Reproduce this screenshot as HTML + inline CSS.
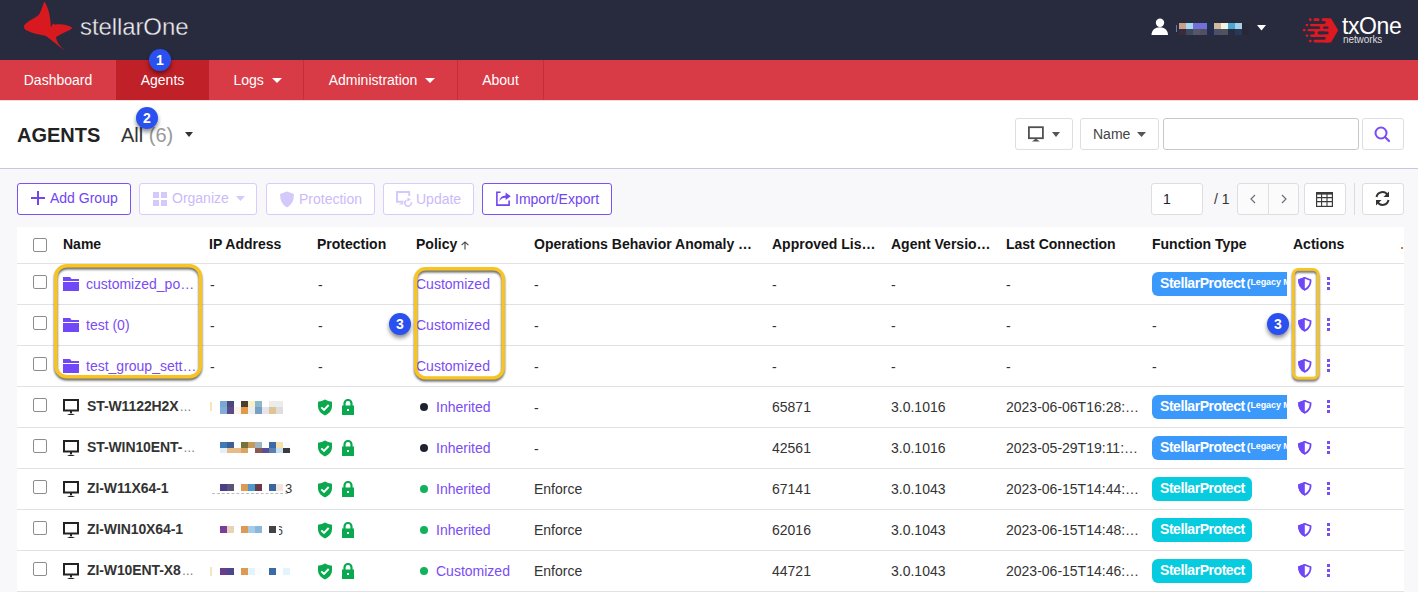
<!DOCTYPE html>
<html><head><meta charset="utf-8">
<style>
*{box-sizing:border-box;margin:0;padding:0}
html,body{width:1418px;height:592px;overflow:hidden;background:#fff;font-family:"Liberation Sans",sans-serif;color:#222}
.abs{position:absolute}
#hdr{position:absolute;left:0;top:0;width:1418px;height:60px;background:#282a3e}
#nav{position:absolute;left:0;top:60px;width:1418px;height:40px;background:#d83b45}
.ni{position:absolute;top:0;height:40px;line-height:40px;color:#fff;font-size:14px;text-align:center}
.sep{position:absolute;top:0;width:1px;height:40px;background:#c42e38}
.badge{position:absolute;width:22px;height:22px;border-radius:50%;background:#2a50f0;color:#fff;font-size:14px;font-weight:bold;text-align:center;line-height:22px;box-shadow:0 3px 4px rgba(0,0,0,.45)}
#title{position:absolute;left:0;top:100px;width:1418px;height:69px;background:#fff;border-bottom:1px solid #c4c7e6}
#tb{position:absolute;left:0;top:169px;width:1418px;height:423px;background:#f8f8fb}
.btn{position:absolute;top:183px;height:32px;border:1px solid #7a52f4;border-radius:3px;background:#fff;color:#6f46f2;font-size:14px;line-height:30px}
.btn.dis{border-color:#d9ccfb;color:#cbbaf9}
.gbtn{position:absolute;border:1px solid #dedee0;border-radius:3px;background:#fff}
#table{position:absolute;left:17px;top:227px;width:1387px;height:365px;background:#fff}
.th{position:absolute;top:236px;font-size:14px;font-weight:bold;color:#151515;white-space:nowrap}
.hl{position:absolute;left:17px;width:1387px;height:1px;background:#e2e2e4}
.cb{position:absolute;width:14px;height:14px;border:1px solid #8d8d8f;border-radius:2px;background:#fff}
.td{position:absolute;font-size:14px;color:#333;white-space:nowrap}
.lnk{color:#7a4cf4}
.ft{position:absolute;height:24px;border-radius:5px;color:#fff;font-weight:bold;font-size:14px;line-height:20px;padding-left:8px;white-space:nowrap;overflow:hidden}
.yb{position:absolute;border:3px solid #f2bf2e;border-radius:9px;box-shadow:1px 2px 3px rgba(0,0,0,.55), inset 1px 1px 2px rgba(0,0,0,.35)}
</style></head><body>
<div id="hdr"></div>
<!-- stellarOne logo -->
<svg class="abs" style="left:0;top:0" width="200" height="60" viewBox="0 0 200 60">
<path fill="#d8191f" d="M44.3,1.5 C47.5,6 50.5,14 50.9,27.3 L53.1,23.5 Q54.5,24.8 56,24.6 C62,23.8 68,24.8 72.6,28.1 C68,31.5 61,34 56,37 C56.5,42 60,47 65.8,50.8 C60,47.5 53,41 46,36 C38,34.5 32,33 28,31 C23,29.5 23,25 26,23.5 C29,20.5 35,18 38.7,15 C41,12 42.5,6 44.3,1.5 Z"/>
</svg>
<div class="abs" style="left:80px;top:13px;font-size:24px;color:#eeeef0;letter-spacing:-0.1px;-webkit-text-stroke:0.35px #282a3e">stellarOne</div>
<!-- user -->
<svg class="abs" style="left:1150px;top:18px" width="19" height="18" viewBox="0 0 19 18"><circle cx="10" cy="4.8" r="4.2" fill="#fff"/><path d="M1.5,17 C1.5,12 5,9.2 9.8,9.2 C14.5,9.2 18,12 18,17 Z" fill="#fff"/></svg>
<div class="abs" style="left:1179px;top:23px;width:7px;height:6px;background:#c8a08a"></div>
<div class="abs" style="left:1179px;top:29px;width:7px;height:6px;background:#3a2a3a"></div>
<div class="abs" style="left:1186px;top:23px;width:7px;height:6px;background:#a8d8f0"></div>
<div class="abs" style="left:1186px;top:29px;width:7px;height:6px;background:#3c4860"></div>
<div class="abs" style="left:1193px;top:23px;width:7px;height:6px;background:#7070d8"></div>
<div class="abs" style="left:1193px;top:29px;width:7px;height:6px;background:#56566a"></div>
<div class="abs" style="left:1200px;top:23px;width:7px;height:6px;background:#7070d8"></div>
<div class="abs" style="left:1200px;top:29px;width:7px;height:6px;background:#505060"></div>
<div class="abs" style="left:1207px;top:23px;width:7px;height:6px;background:#1e3050"></div>
<div class="abs" style="left:1207px;top:29px;width:7px;height:6px;background:#262a50"></div>
<div class="abs" style="left:1214px;top:23px;width:7px;height:6px;background:#d4b898"></div>
<div class="abs" style="left:1214px;top:29px;width:7px;height:6px;background:#4a5068"></div>
<div class="abs" style="left:1221px;top:23px;width:7px;height:6px;background:#f0f4e4"></div>
<div class="abs" style="left:1221px;top:29px;width:7px;height:6px;background:#505260"></div>
<div class="abs" style="left:1228px;top:23px;width:7px;height:6px;background:#48a8d0"></div>
<div class="abs" style="left:1228px;top:29px;width:7px;height:6px;background:#282c40"></div>
<div class="abs" style="left:1235px;top:23px;width:7px;height:6px;background:#a8d0e4"></div>
<div class="abs" style="left:1235px;top:29px;width:7px;height:6px;background:#283858"></div>
<div class="abs" style="left:1242px;top:23px;width:7px;height:6px;background:#262838"></div>
<div class="abs" style="left:1242px;top:29px;width:7px;height:6px;background:#262838"></div>
<div class="abs" style="left:1176px;top:25px;width:1px;height:7px;background:#6a76b0"></div>
<svg class="abs" style="left:1257px;top:25px" width="10" height="6"><path d="M0,0 L9,0 L4.5,5.5Z" fill="#fff"/></svg>
<!-- txOne logo -->
<svg class="abs" style="left:1300px;top:14px" width="42" height="32" viewBox="0 0 42 32">
<g fill="#dd1a22">
<path d="M24.5,4.3 H31 L38.2,16.3 L31,28.4 H24.5 Z"/>
<rect x="21.6" y="4.3" width="6" height="2.8" rx="1.4"/>
<rect x="13.5" y="4.3" width="6" height="2.8" rx="1.4"/>
<rect x="10" y="9.7" width="20" height="2.8" rx="1.4"/>
<rect x="7.6" y="14.8" width="22" height="2.8" rx="1.4"/>
<rect x="10" y="20.2" width="20" height="2.8" rx="1.4"/>
<rect x="13.5" y="25.6" width="16" height="2.8" rx="1.4"/>
<rect x="19.5" y="11" width="5" height="5"/>
<rect x="14" y="16" width="5" height="5"/>
<circle cx="10.25" cy="5.7" r="1.4"/><circle cx="7" cy="11.1" r="1.4"/><circle cx="4.3" cy="16.2" r="1.4"/><circle cx="7" cy="21.6" r="1.4"/><circle cx="10.25" cy="27" r="1.4"/>
</g>
<g fill="#282a3e">
<rect x="0" y="7.1" width="25.7" height="2.6" rx="1.3"/>
<rect x="0" y="23" width="25.7" height="2.6" rx="1.3"/>
<rect x="23" y="12.5" width="5.6" height="2.3" rx="1.15"/>
<rect x="17.6" y="17.6" width="11" height="2.6" rx="1.3"/>
<rect x="0" y="12.5" width="20.3" height="2.3" rx="1.15"/>
<rect x="0" y="17.6" width="14.9" height="2.6" rx="1.3"/>
</g>
</svg>
<div class="abs" style="left:1342px;top:13px;font-size:23px;color:#fff;letter-spacing:-0.4px">txOne</div>
<div class="abs" style="left:1343px;top:35px;font-size:10px;color:#ddd;line-height:10px;letter-spacing:-0.1px">networks</div>

<div id="nav"></div>
<div class="ni" style="left:0;top:60px;width:116px">Dashboard</div>
<div class="abs" style="left:116px;top:60px;width:93px;height:40px;background:#c02027"></div>
<div class="ni" style="left:116px;top:60px;width:93px">Agents</div>
<div class="ni" style="left:210px;top:60px;width:95px">Logs <span style="display:inline-block;width:0;height:0;border-left:5px solid transparent;border-right:5px solid transparent;border-top:5px solid #fff;vertical-align:2px;margin-left:4px"></span></div>
<div class="sep" style="left:303px;top:60px"></div>
<div class="ni" style="left:305px;top:60px;width:154px">Administration <span style="display:inline-block;width:0;height:0;border-left:5px solid transparent;border-right:5px solid transparent;border-top:5px solid #fff;vertical-align:2px;margin-left:4px"></span></div>
<div class="sep" style="left:457px;top:60px"></div>
<div class="ni" style="left:458px;top:60px;width:85px">About</div>
<div class="sep" style="left:543px;top:60px"></div>
<div class="badge" style="left:149px;top:49px">1</div>

<div id="title"></div>
<div class="abs" style="left:0;top:100px;width:1418px;height:1px;background:#f6dadd"></div>
<div class="abs" style="left:17px;top:124px;font-size:20px;font-weight:bold;color:#222">AGENTS</div>
<div class="abs" style="left:121px;top:124px;font-size:20px;color:#333">All <span style="color:#999">(6)</span></div>
<svg class="abs" style="left:185px;top:132px" width="10" height="6"><path d="M0,0 L8,0 L4,5Z" fill="#333"/></svg>
<div class="badge" style="left:136px;top:107px">2</div>

<div class="gbtn" style="left:1015px;top:118px;width:58px;height:32px"></div>
<svg class="abs" style="left:1027px;top:126px" width="18" height="17" viewBox="0 0 18 17"><rect x="1.9" y="1.2" width="14" height="11" fill="none" stroke="#505050" stroke-width="1.8"/><path d="M8.9,12.5 L12.8,15.6 H5 Z" fill="#505050"/></svg>
<svg class="abs" style="left:1052px;top:132px" width="10" height="6"><path d="M0,0 L8,0 L4,5Z" fill="#555"/></svg>
<div class="gbtn" style="left:1080px;top:118px;width:79px;height:32px"></div>
<div class="abs" style="left:1093px;top:126px;font-size:14px;color:#444">Name</div>
<svg class="abs" style="left:1137px;top:132px" width="10" height="6"><path d="M0,0 L9,0 L4.5,5Z" fill="#555"/></svg>
<div class="gbtn" style="left:1163px;top:118px;width:196px;height:32px;border-color:#c8c8cc"></div>
<div class="gbtn" style="left:1362px;top:118px;width:42px;height:32px"></div>
<svg class="abs" style="left:1373px;top:125px" width="20" height="18" viewBox="0 0 20 18"><circle cx="8" cy="8" r="5.5" fill="none" stroke="#7a4cf4" stroke-width="2"/><path d="M12,12 L16,16" stroke="#7a4cf4" stroke-width="2.2" stroke-linecap="round"/></svg>

<div id="tb"></div>
<div class="btn" style="left:17px;width:114px">
 <svg class="abs" style="left:13px;top:7px" width="14" height="14"><path d="M7,0 V14 M0,7 H14" stroke="#6f46f2" stroke-width="2"/></svg>
 <span class="abs" style="left:32px;top:-1px">Add Group</span></div>
<div class="btn dis" style="left:139px;width:118px">
 <svg class="abs" style="left:13px;top:8px" width="14" height="14"><rect x="0" y="0" width="6" height="6" fill="#d5c8fb"/><rect x="8" y="0" width="6" height="6" fill="#d5c8fb"/><rect x="0" y="8" width="6" height="6" fill="#d5c8fb"/><rect x="8" y="8" width="6" height="6" fill="#d5c8fb"/></svg>
 <span class="abs" style="left:32px;top:-1px">Organize</span>
 <svg class="abs" style="left:96px;top:12px" width="10" height="6"><path d="M0,0 L9,0 L4.5,5Z" fill="#d5c8fb"/></svg></div>
<div class="btn dis" style="left:266px;width:109px">
 <svg class="abs" style="left:12px;top:7px" width="16" height="17" viewBox="0 0 16 17"><path d="M8,0.5 L15,3 Q15,13 8,16.5 Q1,13 1,3 Z" fill="#d5c8fb"/></svg>
 <span class="abs" style="left:32px;top:0">Protection</span></div>
<div class="btn dis" style="left:383px;width:91px">
 <svg class="abs" style="left:11px;top:6px" width="18" height="18" viewBox="0 0 18 18"><path d="M8.5,11.8 H2 V2 H14.2 V6" fill="none" stroke="#d5c8fb" stroke-width="1.9"/><path d="M3,14.6 L8,12.6 V14.6 Z" fill="#d5c8fb"/><path d="M11.5,10.2 A3.2,3.2 0 1 0 16.2,12.2" fill="none" stroke="#d5c8fb" stroke-width="1.7"/><path d="M12.4,7.4 L15.9,9.4 L12.4,11.4 Z" fill="#d5c8fb"/></svg>
 <span class="abs" style="left:32px;top:0">Update</span></div>
<div class="btn" style="left:482px;width:130px">
 <svg class="abs" style="left:13px;top:7px" width="17" height="17" viewBox="0 0 17 17"><path d="M4.6,1.2 H0.9 V14.1 H13.1 V9.5" fill="none" stroke="#6f46f2" stroke-width="1.6"/><path d="M3.2,10.2 Q4.2,4.6 9.6,4.4 V1.6 L14.8,5.3 L9.6,8.9 V6.8 Q5.6,6.6 3.2,10.2 Z" fill="#6f46f2"/></svg>
 <span class="abs" style="left:32px;top:0">Import/Export</span></div>

<!-- pagination -->
<div class="gbtn" style="left:1151px;top:183px;width:52px;height:32px"></div>
<div class="abs" style="left:1163px;top:191px;font-size:14px;color:#222">1</div>
<div class="abs" style="left:1214px;top:191px;font-size:14px;color:#333">/ 1</div>
<div class="gbtn" style="left:1237px;top:183px;width:62px;height:32px;background:#fbfbfc"></div>
<div class="abs" style="left:1268px;top:184px;width:1px;height:30px;background:#e0e0e2"></div>
<svg class="abs" style="left:1249px;top:194px" width="8" height="10"><path d="M6,1 L2,5 L6,9" fill="none" stroke="#6a7080" stroke-width="1.2"/></svg>
<svg class="abs" style="left:1280px;top:194px" width="8" height="10"><path d="M2,1 L6,5 L2,9" fill="none" stroke="#6a7080" stroke-width="1.2"/></svg>
<div class="gbtn" style="left:1304px;top:183px;width:42px;height:32px"></div>
<svg class="abs" style="left:1316px;top:192px" width="17" height="15" viewBox="0 0 17 15"><rect x="0.6" y="0.6" width="15.8" height="13.8" fill="none" stroke="#3a3a3a" stroke-width="1.2"/><rect x="0" y="0" width="17" height="2.6" fill="#3a3a3a"/><path d="M0,5.6 H17 M0,9.6 H17 M5.6,0 V15 M11,0 V15" stroke="#3a3a3a" stroke-width="1.1"/></svg>
<div class="abs" style="left:1354px;top:183px;width:1px;height:32px;background:#dcdce0"></div>
<div class="gbtn" style="left:1362px;top:183px;width:42px;height:32px"></div>
<svg class="abs" style="left:1374px;top:190px" width="17" height="17" viewBox="0 0 17 17"><path d="M2.5,7 A6,6 0 0 1 13.5,5" fill="none" stroke="#333" stroke-width="2"/><path d="M15,1.5 V7 H9.5Z" fill="#333"/><path d="M14.5,10 A6,6 0 0 1 3.5,12" fill="none" stroke="#333" stroke-width="2"/><path d="M2,15.5 V10 H7.5Z" fill="#333"/></svg>

<!-- table -->
<div id="table"></div>
<div class="cb" style="left:33px;top:238px"></div>
<div class="th" style="left:63px">Name</div>
<div class="th" style="left:209px">IP Address</div>
<div class="th" style="left:317px">Protection</div>
<div class="th" style="left:416px">Policy</div>
<svg class="abs" style="left:461px;top:241px" width="8" height="9" viewBox="0 0 8 9"><path d="M4,0.8 V8.5 M0.6,4.2 L4,0.9 L7.4,4.2" fill="none" stroke="#444" stroke-width="1.1"/></svg>
<div class="th" style="left:534px">Operations Behavior Anomaly …</div>
<div class="th" style="left:772px">Approved Lis…</div>
<div class="th" style="left:891px">Agent Versio…</div>
<div class="th" style="left:1006px">Last Connection</div>
<div class="th" style="left:1152px">Function Type</div>
<div class="th" style="left:1293px">Actions</div>
<div class="abs" style="left:1401px;top:247px;width:2px;height:2px;background:#c87a3a"></div>
<div class="hl" style="top:263px"></div>
<div class="hl" style="top:304px"></div>
<div class="hl" style="top:345px"></div>
<div class="hl" style="top:386px"></div>
<div class="hl" style="top:427px"></div>
<div class="hl" style="top:468px"></div>
<div class="hl" style="top:509px"></div>
<div class="hl" style="top:550px"></div>
<div class="hl" style="top:591px"></div>
<div id="rows"></div>
<div class="cb" style="left:33px;top:275px"></div>
<svg class="abs" style="left:63px;top:277px" width="17" height="15" viewBox="0 0 17 15"><path d="M0,0 H7 L8.5,2 H16 V4 H0 Z M0,5 H16 V14 H0 Z" fill="#7048f8"/></svg>
<div class="td lnk" style="left:86px;top:276px">customized_po…</div>
<div class="td" style="left:210px;top:277px">-</div>
<div class="td" style="left:318px;top:277px">-</div>
<div class="td lnk" style="left:416px;top:276px">Customized</div>
<div class="td" style="left:534px;top:277px">-</div>
<div class="td" style="left:772px;top:277px">-</div>
<div class="td" style="left:891px;top:277px">-</div>
<div class="td" style="left:1006px;top:277px">-</div>
<div class="ft" style="left:1152px;top:272px;width:135px;background:#3b99fc;border-radius:6px 0 0 6px"><span style="letter-spacing:-0.45px">StellarProtect</span><span style="font-size:11px;vertical-align:1px;margin-left:2px">(</span><span style="font-size:9px;vertical-align:2.5px;letter-spacing:-0.1px">Legacy Mode)</span></div>
<svg class="abs" style="left:1297px;top:275px" width="16" height="17" viewBox="0 0 16 17"><path d="M7.8,2.8 Q10.8,4.2 13.6,5 Q13.8,11.8 7.8,14.8 Q1.8,11.8 2,5 Q4.8,4.2 7.8,2.8 Z" fill="none" stroke="#6f46f8" stroke-width="1.8" stroke-linejoin="round"/><path d="M7.8,1.9 Q4.6,3.4 1.2,4.3 Q0.9,12.4 7.8,15.7 Z" fill="#6f46f8"/></svg>
<div class="abs" style="left:1327px;top:277px;width:3px;height:3px;background:#7a4cf4"></div>
<div class="abs" style="left:1327px;top:282px;width:3px;height:3px;background:#7a4cf4"></div>
<div class="abs" style="left:1327px;top:287px;width:3px;height:3px;background:#7a4cf4"></div>
<div class="cb" style="left:33px;top:316px"></div>
<svg class="abs" style="left:63px;top:318px" width="17" height="15" viewBox="0 0 17 15"><path d="M0,0 H7 L8.5,2 H16 V4 H0 Z M0,5 H16 V14 H0 Z" fill="#7048f8"/></svg>
<div class="td lnk" style="left:86px;top:317px">test (0)</div>
<div class="td" style="left:210px;top:318px">-</div>
<div class="td" style="left:318px;top:318px">-</div>
<div class="td lnk" style="left:416px;top:317px">Customized</div>
<div class="td" style="left:534px;top:318px">-</div>
<div class="td" style="left:772px;top:318px">-</div>
<div class="td" style="left:891px;top:318px">-</div>
<div class="td" style="left:1006px;top:318px">-</div>
<div class="td" style="left:1152px;top:318px">-</div>
<svg class="abs" style="left:1297px;top:316px" width="16" height="17" viewBox="0 0 16 17"><path d="M7.8,2.8 Q10.8,4.2 13.6,5 Q13.8,11.8 7.8,14.8 Q1.8,11.8 2,5 Q4.8,4.2 7.8,2.8 Z" fill="none" stroke="#6f46f8" stroke-width="1.8" stroke-linejoin="round"/><path d="M7.8,1.9 Q4.6,3.4 1.2,4.3 Q0.9,12.4 7.8,15.7 Z" fill="#6f46f8"/></svg>
<div class="abs" style="left:1327px;top:318px;width:3px;height:3px;background:#7a4cf4"></div>
<div class="abs" style="left:1327px;top:323px;width:3px;height:3px;background:#7a4cf4"></div>
<div class="abs" style="left:1327px;top:328px;width:3px;height:3px;background:#7a4cf4"></div>
<div class="cb" style="left:33px;top:357px"></div>
<svg class="abs" style="left:63px;top:359px" width="17" height="15" viewBox="0 0 17 15"><path d="M0,0 H7 L8.5,2 H16 V4 H0 Z M0,5 H16 V14 H0 Z" fill="#7048f8"/></svg>
<div class="td lnk" style="left:86px;top:358px">test_group_sett…</div>
<div class="td" style="left:210px;top:359px">-</div>
<div class="td" style="left:318px;top:359px">-</div>
<div class="td lnk" style="left:416px;top:358px">Customized</div>
<div class="td" style="left:534px;top:359px">-</div>
<div class="td" style="left:772px;top:359px">-</div>
<div class="td" style="left:891px;top:359px">-</div>
<div class="td" style="left:1006px;top:359px">-</div>
<div class="td" style="left:1152px;top:359px">-</div>
<svg class="abs" style="left:1297px;top:357px" width="16" height="17" viewBox="0 0 16 17"><path d="M7.8,2.8 Q10.8,4.2 13.6,5 Q13.8,11.8 7.8,14.8 Q1.8,11.8 2,5 Q4.8,4.2 7.8,2.8 Z" fill="none" stroke="#6f46f8" stroke-width="1.8" stroke-linejoin="round"/><path d="M7.8,1.9 Q4.6,3.4 1.2,4.3 Q0.9,12.4 7.8,15.7 Z" fill="#6f46f8"/></svg>
<div class="abs" style="left:1327px;top:359px;width:3px;height:3px;background:#7a4cf4"></div>
<div class="abs" style="left:1327px;top:364px;width:3px;height:3px;background:#7a4cf4"></div>
<div class="abs" style="left:1327px;top:369px;width:3px;height:3px;background:#7a4cf4"></div>
<div class="cb" style="left:33px;top:398px"></div>
<svg class="abs" style="left:63px;top:399px" width="17" height="17" viewBox="0 0 17 17"><rect x="1" y="1" width="14" height="10.5" fill="none" stroke="#222" stroke-width="2"/><rect x="7" y="11.5" width="2" height="2.5" fill="#222"/><path d="M4,16 Q8,13 12,16 Z" fill="#222"/></svg>
<div class="td" style="left:87px;top:398px;font-weight:bold;letter-spacing:-0.1px">ST-W1122H2X<span style="font-weight:normal;color:#777;font-size:12px;margin-left:1px">…</span></div>
<div class="abs" style="left:220px;top:401px;width:7px;height:6px;background:#78a6d6"></div>
<div class="abs" style="left:227px;top:401px;width:7px;height:6px;background:#4a4878"></div>
<div class="abs" style="left:241px;top:401px;width:7px;height:6px;background:#4a3e2c"></div>
<div class="abs" style="left:248px;top:401px;width:7px;height:6px;background:#f8f0c8"></div>
<div class="abs" style="left:255px;top:401px;width:7px;height:6px;background:#8ab8c8"></div>
<div class="abs" style="left:269px;top:401px;width:7px;height:6px;background:#ececec"></div>
<div class="abs" style="left:276px;top:401px;width:7px;height:6px;background:#ececec"></div>
<div class="abs" style="left:220px;top:407px;width:7px;height:7px;background:#80acd8"></div>
<div class="abs" style="left:227px;top:407px;width:7px;height:7px;background:#5a4a8a"></div>
<div class="abs" style="left:234px;top:407px;width:7px;height:7px;background:#fdf3ea"></div>
<div class="abs" style="left:241px;top:407px;width:7px;height:7px;background:#e09a48"></div>
<div class="abs" style="left:248px;top:407px;width:7px;height:7px;background:#eeeeee"></div>
<div class="abs" style="left:255px;top:407px;width:7px;height:7px;background:#78a0c4"></div>
<div class="abs" style="left:262px;top:407px;width:7px;height:7px;background:#e6e4f0"></div>
<div class="abs" style="left:269px;top:407px;width:7px;height:7px;background:#e0c494"></div>
<div class="abs" style="left:276px;top:407px;width:7px;height:7px;background:#dedede"></div>
<svg class="abs" style="left:317px;top:399px" width="16" height="17" viewBox="0 0 16 17"><path d="M8,0.5 Q11,2.5 15,2.8 V7.5 Q15,13 8,16.5 Q1,13 1,7.5 V2.8 Q5,2.5 8,0.5 Z" fill="#0aa84f"/><path d="M4.3,8.3 L7,11 L11.7,6" fill="none" stroke="#fff" stroke-width="1.9"/></svg>
<svg class="abs" style="left:341px;top:399px" width="14" height="17" viewBox="0 0 14 17"><path d="M3.5,7 V4.5 A3.5,3.5 0 0 1 10.5,4.5 V7" fill="none" stroke="#0aa84f" stroke-width="2.2"/><rect x="1" y="6.5" width="12" height="9.5" fill="#0aa84f"/><rect x="6" y="10" width="2" height="2" fill="#fff"/></svg>
<div class="abs" style="left:420px;top:403px;width:8px;height:8px;border-radius:50%;background:#1f2330"></div>
<div class="td lnk" style="left:436px;top:399px">Inherited</div>
<div class="td" style="left:534px;top:400px">-</div>
<div class="td" style="left:772px;top:399px">65871</div>
<div class="td" style="left:891px;top:399px">3.0.1016</div>
<div class="td" style="left:1006px;top:399px">2023-06-06T16:28:…</div>
<div class="ft" style="left:1152px;top:395px;width:135px;background:#3b99fc;border-radius:6px 0 0 6px"><span style="letter-spacing:-0.45px">StellarProtect</span><span style="font-size:11px;vertical-align:1px;margin-left:2px">(</span><span style="font-size:9px;vertical-align:2.5px;letter-spacing:-0.1px">Legacy Mode)</span></div>
<svg class="abs" style="left:1297px;top:398px" width="16" height="17" viewBox="0 0 16 17"><path d="M7.8,2.8 Q10.8,4.2 13.6,5 Q13.8,11.8 7.8,14.8 Q1.8,11.8 2,5 Q4.8,4.2 7.8,2.8 Z" fill="none" stroke="#6f46f8" stroke-width="1.8" stroke-linejoin="round"/><path d="M7.8,1.9 Q4.6,3.4 1.2,4.3 Q0.9,12.4 7.8,15.7 Z" fill="#6f46f8"/></svg>
<div class="abs" style="left:1327px;top:400px;width:3px;height:3px;background:#7a4cf4"></div>
<div class="abs" style="left:1327px;top:405px;width:3px;height:3px;background:#7a4cf4"></div>
<div class="abs" style="left:1327px;top:410px;width:3px;height:3px;background:#7a4cf4"></div>
<div class="cb" style="left:33px;top:439px"></div>
<svg class="abs" style="left:63px;top:440px" width="17" height="17" viewBox="0 0 17 17"><rect x="1" y="1" width="14" height="10.5" fill="none" stroke="#222" stroke-width="2"/><rect x="7" y="11.5" width="2" height="2.5" fill="#222"/><path d="M4,16 Q8,13 12,16 Z" fill="#222"/></svg>
<div class="td" style="left:87px;top:439px;font-weight:bold;letter-spacing:-0.1px">ST-WIN10ENT-<span style="font-weight:normal;color:#777;font-size:12px;margin-left:1px">…</span></div>
<div class="abs" style="left:220px;top:442px;width:7px;height:6px;background:#3f7ab4"></div>
<div class="abs" style="left:227px;top:442px;width:7px;height:6px;background:#3f5e94"></div>
<div class="abs" style="left:241px;top:442px;width:7px;height:6px;background:#75733a"></div>
<div class="abs" style="left:248px;top:442px;width:7px;height:6px;background:#c8975a"></div>
<div class="abs" style="left:255px;top:442px;width:7px;height:6px;background:#9cb6c2"></div>
<div class="abs" style="left:269px;top:442px;width:7px;height:6px;background:#3a6aa8"></div>
<div class="abs" style="left:276px;top:442px;width:7px;height:6px;background:#f6e2a8"></div>
<div class="abs" style="left:283px;top:442px;width:7px;height:6px;background:#f8fcfe"></div>
<div class="abs" style="left:220px;top:448px;width:7px;height:5px;background:#e2f0fa"></div>
<div class="abs" style="left:227px;top:448px;width:7px;height:5px;background:#e8bc88"></div>
<div class="abs" style="left:234px;top:448px;width:7px;height:5px;background:#e8bc88"></div>
<div class="abs" style="left:241px;top:448px;width:7px;height:5px;background:#dca460"></div>
<div class="abs" style="left:255px;top:448px;width:7px;height:5px;background:#8a5a50"></div>
<div class="abs" style="left:262px;top:448px;width:7px;height:5px;background:#5e4e98"></div>
<div class="abs" style="left:269px;top:448px;width:7px;height:5px;background:#5a80b0"></div>
<div class="abs" style="left:276px;top:448px;width:7px;height:5px;background:#c8e0f2"></div>
<div class="abs" style="left:283px;top:448px;width:7px;height:5px;background:#3c3a40"></div>
<svg class="abs" style="left:317px;top:440px" width="16" height="17" viewBox="0 0 16 17"><path d="M8,0.5 Q11,2.5 15,2.8 V7.5 Q15,13 8,16.5 Q1,13 1,7.5 V2.8 Q5,2.5 8,0.5 Z" fill="#0aa84f"/><path d="M4.3,8.3 L7,11 L11.7,6" fill="none" stroke="#fff" stroke-width="1.9"/></svg>
<svg class="abs" style="left:341px;top:440px" width="14" height="17" viewBox="0 0 14 17"><path d="M3.5,7 V4.5 A3.5,3.5 0 0 1 10.5,4.5 V7" fill="none" stroke="#0aa84f" stroke-width="2.2"/><rect x="1" y="6.5" width="12" height="9.5" fill="#0aa84f"/><rect x="6" y="10" width="2" height="2" fill="#fff"/></svg>
<div class="abs" style="left:420px;top:444px;width:8px;height:8px;border-radius:50%;background:#1f2330"></div>
<div class="td lnk" style="left:436px;top:440px">Inherited</div>
<div class="td" style="left:534px;top:441px">-</div>
<div class="td" style="left:772px;top:440px">42561</div>
<div class="td" style="left:891px;top:440px">3.0.1016</div>
<div class="td" style="left:1006px;top:440px">2023-05-29T19:11:…</div>
<div class="ft" style="left:1152px;top:436px;width:135px;background:#3b99fc;border-radius:6px 0 0 6px"><span style="letter-spacing:-0.45px">StellarProtect</span><span style="font-size:11px;vertical-align:1px;margin-left:2px">(</span><span style="font-size:9px;vertical-align:2.5px;letter-spacing:-0.1px">Legacy Mode)</span></div>
<svg class="abs" style="left:1297px;top:439px" width="16" height="17" viewBox="0 0 16 17"><path d="M7.8,2.8 Q10.8,4.2 13.6,5 Q13.8,11.8 7.8,14.8 Q1.8,11.8 2,5 Q4.8,4.2 7.8,2.8 Z" fill="none" stroke="#6f46f8" stroke-width="1.8" stroke-linejoin="round"/><path d="M7.8,1.9 Q4.6,3.4 1.2,4.3 Q0.9,12.4 7.8,15.7 Z" fill="#6f46f8"/></svg>
<div class="abs" style="left:1327px;top:441px;width:3px;height:3px;background:#7a4cf4"></div>
<div class="abs" style="left:1327px;top:446px;width:3px;height:3px;background:#7a4cf4"></div>
<div class="abs" style="left:1327px;top:451px;width:3px;height:3px;background:#7a4cf4"></div>
<div class="cb" style="left:33px;top:480px"></div>
<svg class="abs" style="left:63px;top:481px" width="17" height="17" viewBox="0 0 17 17"><rect x="1" y="1" width="14" height="10.5" fill="none" stroke="#222" stroke-width="2"/><rect x="7" y="11.5" width="2" height="2.5" fill="#222"/><path d="M4,16 Q8,13 12,16 Z" fill="#222"/></svg>
<div class="td" style="left:87px;top:480px;font-weight:bold;letter-spacing:-0.1px">ZI-W11X64-1</div>
<div class="abs" style="left:220px;top:484px;width:7px;height:7px;background:#4a3e8a"></div>
<div class="abs" style="left:227px;top:484px;width:7px;height:7px;background:#5c5478"></div>
<div class="abs" style="left:241px;top:484px;width:7px;height:7px;background:#dc9a52"></div>
<div class="abs" style="left:248px;top:484px;width:7px;height:7px;background:#4a9ad0"></div>
<div class="abs" style="left:255px;top:484px;width:7px;height:7px;background:#6a3a4a"></div>
<div class="abs" style="left:269px;top:484px;width:7px;height:7px;background:#3a64a0"></div>
<div class="abs" style="left:276px;top:484px;width:7px;height:7px;background:#f2e6dc"></div>
<svg class="abs" style="left:317px;top:481px" width="16" height="17" viewBox="0 0 16 17"><path d="M8,0.5 Q11,2.5 15,2.8 V7.5 Q15,13 8,16.5 Q1,13 1,7.5 V2.8 Q5,2.5 8,0.5 Z" fill="#0aa84f"/><path d="M4.3,8.3 L7,11 L11.7,6" fill="none" stroke="#fff" stroke-width="1.9"/></svg>
<svg class="abs" style="left:341px;top:481px" width="14" height="17" viewBox="0 0 14 17"><path d="M3.5,7 V4.5 A3.5,3.5 0 0 1 10.5,4.5 V7" fill="none" stroke="#0aa84f" stroke-width="2.2"/><rect x="1" y="6.5" width="12" height="9.5" fill="#0aa84f"/><rect x="6" y="10" width="2" height="2" fill="#fff"/></svg>
<div class="abs" style="left:420px;top:485px;width:8px;height:8px;border-radius:50%;background:#12b15c"></div>
<div class="td lnk" style="left:436px;top:481px">Inherited</div>
<div class="td" style="left:534px;top:481px">Enforce</div>
<div class="td" style="left:772px;top:481px">67141</div>
<div class="td" style="left:891px;top:481px">3.0.1043</div>
<div class="td" style="left:1006px;top:481px">2023-06-15T14:44:…</div>
<div class="ft" style="left:1152px;top:477px;width:100px;background:#07cbdf;border-radius:6px;line-height:22px"><span style="letter-spacing:-0.45px">StellarProtect</span></div>
<svg class="abs" style="left:1297px;top:480px" width="16" height="17" viewBox="0 0 16 17"><path d="M7.8,2.8 Q10.8,4.2 13.6,5 Q13.8,11.8 7.8,14.8 Q1.8,11.8 2,5 Q4.8,4.2 7.8,2.8 Z" fill="none" stroke="#6f46f8" stroke-width="1.8" stroke-linejoin="round"/><path d="M7.8,1.9 Q4.6,3.4 1.2,4.3 Q0.9,12.4 7.8,15.7 Z" fill="#6f46f8"/></svg>
<div class="abs" style="left:1327px;top:482px;width:3px;height:3px;background:#7a4cf4"></div>
<div class="abs" style="left:1327px;top:487px;width:3px;height:3px;background:#7a4cf4"></div>
<div class="abs" style="left:1327px;top:492px;width:3px;height:3px;background:#7a4cf4"></div>
<div class="cb" style="left:33px;top:521px"></div>
<svg class="abs" style="left:63px;top:522px" width="17" height="17" viewBox="0 0 17 17"><rect x="1" y="1" width="14" height="10.5" fill="none" stroke="#222" stroke-width="2"/><rect x="7" y="11.5" width="2" height="2.5" fill="#222"/><path d="M4,16 Q8,13 12,16 Z" fill="#222"/></svg>
<div class="td" style="left:87px;top:521px;font-weight:bold;letter-spacing:-0.1px">ZI-WIN10X64-1</div>
<div class="abs" style="left:220px;top:526px;width:7px;height:7px;background:#7a3e98"></div>
<div class="abs" style="left:227px;top:526px;width:7px;height:7px;background:#e6d4b4"></div>
<div class="abs" style="left:241px;top:526px;width:7px;height:7px;background:#dc9a52"></div>
<div class="abs" style="left:248px;top:526px;width:7px;height:7px;background:#a8cce6"></div>
<div class="abs" style="left:255px;top:526px;width:7px;height:7px;background:#8ab8dc"></div>
<div class="abs" style="left:269px;top:526px;width:7px;height:7px;background:#444444"></div>
<svg class="abs" style="left:317px;top:522px" width="16" height="17" viewBox="0 0 16 17"><path d="M8,0.5 Q11,2.5 15,2.8 V7.5 Q15,13 8,16.5 Q1,13 1,7.5 V2.8 Q5,2.5 8,0.5 Z" fill="#0aa84f"/><path d="M4.3,8.3 L7,11 L11.7,6" fill="none" stroke="#fff" stroke-width="1.9"/></svg>
<svg class="abs" style="left:341px;top:522px" width="14" height="17" viewBox="0 0 14 17"><path d="M3.5,7 V4.5 A3.5,3.5 0 0 1 10.5,4.5 V7" fill="none" stroke="#0aa84f" stroke-width="2.2"/><rect x="1" y="6.5" width="12" height="9.5" fill="#0aa84f"/><rect x="6" y="10" width="2" height="2" fill="#fff"/></svg>
<div class="abs" style="left:420px;top:526px;width:8px;height:8px;border-radius:50%;background:#12b15c"></div>
<div class="td lnk" style="left:436px;top:522px">Inherited</div>
<div class="td" style="left:534px;top:522px">Enforce</div>
<div class="td" style="left:772px;top:522px">62016</div>
<div class="td" style="left:891px;top:522px">3.0.1043</div>
<div class="td" style="left:1006px;top:522px">2023-06-15T14:48:…</div>
<div class="ft" style="left:1152px;top:518px;width:100px;background:#07cbdf;border-radius:6px;line-height:22px"><span style="letter-spacing:-0.45px">StellarProtect</span></div>
<svg class="abs" style="left:1297px;top:521px" width="16" height="17" viewBox="0 0 16 17"><path d="M7.8,2.8 Q10.8,4.2 13.6,5 Q13.8,11.8 7.8,14.8 Q1.8,11.8 2,5 Q4.8,4.2 7.8,2.8 Z" fill="none" stroke="#6f46f8" stroke-width="1.8" stroke-linejoin="round"/><path d="M7.8,1.9 Q4.6,3.4 1.2,4.3 Q0.9,12.4 7.8,15.7 Z" fill="#6f46f8"/></svg>
<div class="abs" style="left:1327px;top:523px;width:3px;height:3px;background:#7a4cf4"></div>
<div class="abs" style="left:1327px;top:528px;width:3px;height:3px;background:#7a4cf4"></div>
<div class="abs" style="left:1327px;top:533px;width:3px;height:3px;background:#7a4cf4"></div>
<div class="cb" style="left:33px;top:562px"></div>
<svg class="abs" style="left:63px;top:563px" width="17" height="17" viewBox="0 0 17 17"><rect x="1" y="1" width="14" height="10.5" fill="none" stroke="#222" stroke-width="2"/><rect x="7" y="11.5" width="2" height="2.5" fill="#222"/><path d="M4,16 Q8,13 12,16 Z" fill="#222"/></svg>
<div class="td" style="left:87px;top:562px;font-weight:bold;letter-spacing:-0.1px">ZI-W10ENT-X8<span style="font-weight:normal;color:#777;font-size:12px;margin-left:1px">…</span></div>
<div class="abs" style="left:220px;top:568px;width:7px;height:7px;background:#6a3c8c"></div>
<div class="abs" style="left:227px;top:568px;width:7px;height:7px;background:#4a4690"></div>
<div class="abs" style="left:241px;top:568px;width:7px;height:7px;background:#dc9a52"></div>
<div class="abs" style="left:248px;top:568px;width:7px;height:7px;background:#e4f4fc"></div>
<div class="abs" style="left:255px;top:568px;width:7px;height:7px;background:#fafcfe"></div>
<div class="abs" style="left:269px;top:568px;width:7px;height:7px;background:#3a6aa8"></div>
<div class="abs" style="left:283px;top:568px;width:7px;height:7px;background:#e4f4fc"></div>
<svg class="abs" style="left:317px;top:563px" width="16" height="17" viewBox="0 0 16 17"><path d="M8,0.5 Q11,2.5 15,2.8 V7.5 Q15,13 8,16.5 Q1,13 1,7.5 V2.8 Q5,2.5 8,0.5 Z" fill="#0aa84f"/><path d="M4.3,8.3 L7,11 L11.7,6" fill="none" stroke="#fff" stroke-width="1.9"/></svg>
<svg class="abs" style="left:341px;top:563px" width="14" height="17" viewBox="0 0 14 17"><path d="M3.5,7 V4.5 A3.5,3.5 0 0 1 10.5,4.5 V7" fill="none" stroke="#0aa84f" stroke-width="2.2"/><rect x="1" y="6.5" width="12" height="9.5" fill="#0aa84f"/><rect x="6" y="10" width="2" height="2" fill="#fff"/></svg>
<div class="abs" style="left:420px;top:567px;width:8px;height:8px;border-radius:50%;background:#12b15c"></div>
<div class="td lnk" style="left:436px;top:563px">Customized</div>
<div class="td" style="left:534px;top:563px">Enforce</div>
<div class="td" style="left:772px;top:563px">44721</div>
<div class="td" style="left:891px;top:563px">3.0.1043</div>
<div class="td" style="left:1006px;top:563px">2023-06-15T14:46:…</div>
<div class="ft" style="left:1152px;top:559px;width:100px;background:#07cbdf;border-radius:6px;line-height:22px"><span style="letter-spacing:-0.45px">StellarProtect</span></div>
<svg class="abs" style="left:1297px;top:562px" width="16" height="17" viewBox="0 0 16 17"><path d="M7.8,2.8 Q10.8,4.2 13.6,5 Q13.8,11.8 7.8,14.8 Q1.8,11.8 2,5 Q4.8,4.2 7.8,2.8 Z" fill="none" stroke="#6f46f8" stroke-width="1.8" stroke-linejoin="round"/><path d="M7.8,1.9 Q4.6,3.4 1.2,4.3 Q0.9,12.4 7.8,15.7 Z" fill="#6f46f8"/></svg>
<div class="abs" style="left:1327px;top:564px;width:3px;height:3px;background:#7a4cf4"></div>
<div class="abs" style="left:1327px;top:569px;width:3px;height:3px;background:#7a4cf4"></div>
<div class="abs" style="left:1327px;top:574px;width:3px;height:3px;background:#7a4cf4"></div>
<div class="abs" style="left:212px;top:493px;width:76px;height:0;border-top:1px dashed rgba(40,40,60,.3)"></div>
<div class="abs" style="left:285px;top:482px;font-size:13px;color:#333;line-height:14px">3</div>
<div class="abs" style="left:279px;top:524px;font-size:13px;color:#444;line-height:14px;width:4px;overflow:hidden;direction:rtl">6</div>
<div class="abs" style="left:210px;top:402px;width:2px;height:9px;background:#f3e6b8"></div>
<div class="abs" style="left:210px;top:567px;width:2px;height:9px;background:#f3e6b8"></div>
<svg class="abs" style="left:50px;top:260.2px;overflow:visible" width="156.2" height="124.5"><rect x="5.75" y="5.75" width="144.7" height="111.0" rx="11" fill="none" stroke="#f8c421" stroke-width="3.5" style="filter:drop-shadow(0 2px 1.2px rgba(0,0,0,.6))"/></svg>
<svg class="abs" style="left:410.2px;top:263.1px;overflow:visible" width="98.90000000000003" height="122.59999999999997"><rect x="5.7" y="5.7" width="87.50000000000003" height="109.19999999999996" rx="10" fill="none" stroke="#f8c421" stroke-width="3.4" style="filter:drop-shadow(0 2px 1.2px rgba(0,0,0,.6))"/></svg>
<svg class="abs" style="left:1288.1px;top:263.5px;overflow:visible" width="35.40000000000009" height="121.60000000000002"><rect x="5.4" y="5.4" width="24.60000000000009" height="108.80000000000003" rx="5" fill="none" stroke="#f8c421" stroke-width="2.8" style="filter:drop-shadow(0 2px 1.2px rgba(0,0,0,.6))"/></svg>
<div class="badge" style="left:389px;top:313px">3</div>
<div class="badge" style="left:1267px;top:313px">3</div>
<!--endrows-->
</body></html>
